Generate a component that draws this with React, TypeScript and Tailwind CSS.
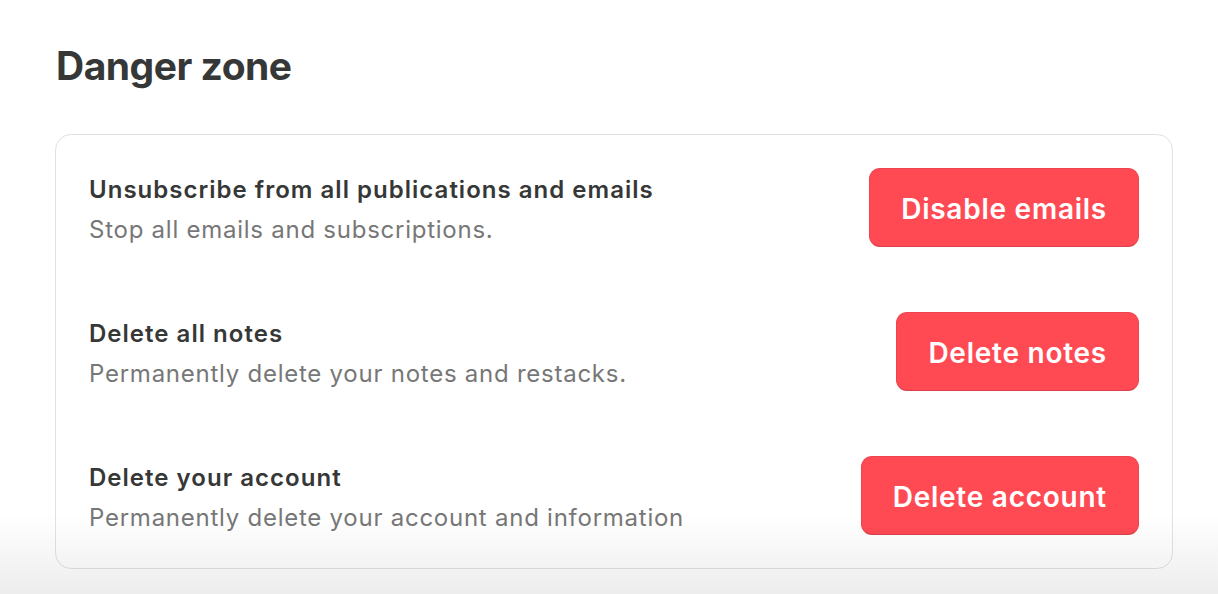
import React from "react";

const rows = [
  { title: "Unsubscribe from all publications and emails", desc: "Stop all emails and subscriptions.", btn: "Disable emails" },
  { title: "Delete all notes", desc: "Permanently delete your notes and restacks.", btn: "Delete notes" },
  { title: "Delete your account", desc: "Permanently delete your account and information", btn: "Delete account" },
];

export default function App() {
  return (
    <div className="relative w-[1218px] h-[594px] overflow-hidden bg-white" style={{ fontFamily: "Inter, 'Noto Sans', sans-serif" }}>
      <div className="pl-[55px] pr-[45px] pt-[42px]">
        <h1 className="text-[39px] leading-[48px] font-bold text-[#363737] tracking-[-0.5px] pl-[1px]">Danger zone</h1>
        <div className="mt-[44px] border border-[#e2e2e2] rounded-[16px] bg-white px-[33px] pt-[33px] pb-[33px] flex flex-col gap-[65px]">
          {rows.map((r) => (
            <div key={r.title} className="flex items-center justify-between h-[79px]">
              <div className="flex flex-col">
                <div className="text-[24px] leading-[30px] font-semibold text-[#363737] tracking-[1.02px] mt-[4px]">{r.title}</div>
                <div className="text-[24px] leading-[30px] text-[#777777] tracking-[0.75px] mt-[10px]">{r.desc}</div>
              </div>
              <button className="h-[79px] px-[31px] pt-[2px] rounded-[11px] bg-[#ff4a54] border border-[#ec4550] border-b-[#d9414b] text-white text-[28px] font-semibold tracking-[0.75px]">
                {r.btn}
              </button>
            </div>
          ))}
        </div>
      </div>
      <div className="pointer-events-none absolute left-0 right-0 bottom-0 h-[80px] bg-gradient-to-b from-[rgba(0,0,0,0)] to-[rgba(0,0,0,0.07)]" />
    </div>
  );
}
